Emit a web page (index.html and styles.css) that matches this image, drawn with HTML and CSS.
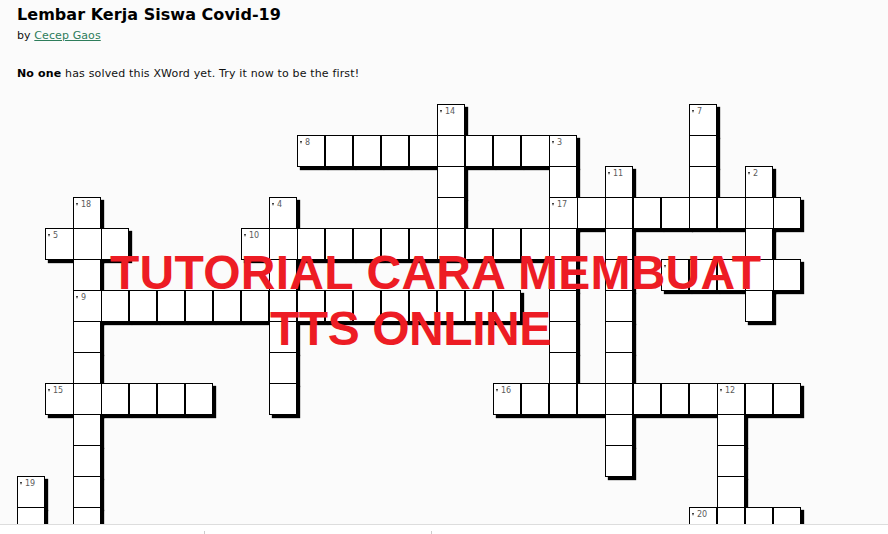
FILE: index.html
```html
<!DOCTYPE html>
<html lang="id">
<head>
<meta charset="utf-8">
<title>Lembar Kerja Siswa Covid-19</title>
<link rel="stylesheet" href="styles.css">
</head>
<body>
<main class="page">
  <h1 class="title">Lembar Kerja Siswa Covid-19</h1>
  <p class="byline">by <a href="#">Cecep Gaos</a></p>
  <p class="status"><strong>No one</strong> has solved this XWord yet. Try it now to be the first!</p>
  <div class="board">
    <div class="row">
      <div class="cell c15"><span class="num">14</span></div>
      <div class="cell c24"><span class="num">7</span></div>
    </div>
    <div class="row">
      <div class="cell c10"><span class="num">8</span></div>
      <div class="cell c11"></div><div class="cell c12"></div><div class="cell c13"></div><div class="cell j c14"></div><div class="cell c15"></div><div class="cell c16"></div><div class="cell c17"></div><div class="cell j c18"></div>
      <div class="cell c19"><span class="num">3</span></div>
      <div class="cell c24"></div>
    </div>
    <div class="row">
      <div class="cell c15"></div>
      <div class="cell c19"></div>
      <div class="cell c21"><span class="num">11</span></div>
      <div class="cell c24"></div>
      <div class="cell c26"><span class="num">2</span></div>
    </div>
    <div class="row">
      <div class="cell c2"><span class="num">18</span></div>
      <div class="cell c9"><span class="num">4</span></div>
      <div class="cell c15"></div>
      <div class="cell j c19"><span class="num">17</span></div>
      <div class="cell j c20"></div><div class="cell c21"></div><div class="cell c22"></div><div class="cell j c23"></div><div class="cell c24"></div><div class="cell j c25"></div><div class="cell j c26"></div><div class="cell c27"></div>
    </div>
    <div class="row">
      <div class="cell j c1"><span class="num">5</span></div>
      <div class="cell j c2"></div><div class="cell c3"></div>
      <div class="cell j c8"><span class="num">10</span></div>
      <div class="cell j c9"></div><div class="cell c10"></div><div class="cell c11"></div><div class="cell c12"></div><div class="cell c13"></div><div class="cell j c14"></div><div class="cell c15"></div><div class="cell c16"></div><div class="cell c17"></div><div class="cell j c18"></div><div class="cell c19"></div>
      <div class="cell c21"></div>
      <div class="cell c26"></div>
    </div>
    <div class="row">
      <div class="cell c2"></div>
      <div class="cell c9"></div>
      <div class="cell c19"></div>
      <div class="cell c21"></div>
      <div class="cell c23 marked"></div>
      <div class="cell c24"></div><div class="cell j c25"></div><div class="cell j c26"></div><div class="cell c27"></div>
    </div>
    <div class="row">
      <div class="cell j c2"><span class="num">9</span></div>
      <div class="cell c3"></div><div class="cell c4"></div><div class="cell c5"></div><div class="cell c6"></div><div class="cell c7"></div><div class="cell c8"></div><div class="cell c9"></div><div class="cell c10"></div><div class="cell c11"></div><div class="cell c12"></div><div class="cell c13"></div><div class="cell c14"></div><div class="cell c15"></div><div class="cell c16"></div><div class="cell c17"></div>
      <div class="cell c19"></div>
      <div class="cell c21"></div>
      <div class="cell c26"></div>
    </div>
    <div class="row">
      <div class="cell c2"></div>
      <div class="cell c9"></div>
      <div class="cell c19"></div>
      <div class="cell c21"></div>
    </div>
    <div class="row">
      <div class="cell c2"></div>
      <div class="cell c9"></div>
      <div class="cell c19"></div>
      <div class="cell c21"></div>
    </div>
    <div class="row">
      <div class="cell j c1"><span class="num">15</span></div>
      <div class="cell j c2"></div><div class="cell c3"></div><div class="cell c4"></div><div class="cell c5"></div><div class="cell c6"></div>
      <div class="cell c9"></div>
      <div class="cell c17"><span class="num">16</span></div>
      <div class="cell c18"></div><div class="cell c19"></div><div class="cell j c20"></div><div class="cell c21"></div><div class="cell c22"></div><div class="cell c23"></div><div class="cell j c24"></div>
      <div class="cell c25"><span class="num">12</span></div>
      <div class="cell c26"></div><div class="cell c27"></div>
    </div>
    <div class="row">
      <div class="cell c2"></div>
      <div class="cell c21"></div>
      <div class="cell c25"></div>
    </div>
    <div class="row">
      <div class="cell c2"></div>
      <div class="cell c21"></div>
      <div class="cell c25"></div>
    </div>
    <div class="row">
      <div class="cell c0"><span class="num">19</span></div>
      <div class="cell c2"></div>
      <div class="cell c25"></div>
    </div>
    <div class="row">
      <div class="cell c0"></div>
      <div class="cell c2"></div>
      <div class="cell c24"><span class="num">20</span></div>
      <div class="cell c25"></div><div class="cell c26"></div><div class="cell c27"></div>
    </div>
  </div>
  <div class="banner">
    <div class="line-one">TUTORIAL CARA MEMBUAT</div>
    <div class="line-two">TTS ONLINE</div>
  </div>
</main>
<footer class="bar">
  <span class="tick"></span>
  <span class="tick"></span>
</footer>
</body>
</html>
```
FILE: styles.css
```css
html, body {
  margin: 0;
  height: 100%;
}
body {
  display: flex;
  flex-direction: column;
  height: 534px;
  overflow: hidden;
  background: #fff;
  font-family: "DejaVu Sans", Verdana, sans-serif;
  color: #111;
}
.page {
  position: relative;
  flex: 1;
  min-height: 0;
  overflow: hidden;
  background: #fbfbfb;
  padding: 5px 0 0 17px;
}
.title {
  margin: 0;
  font-size: 16px;
  line-height: 20px;
  letter-spacing: 0.04px;
  font-weight: 700;
  color: #000;
}
.byline {
  margin: 3px 0 0;
  font-size: 11px;
  line-height: 16px;
  letter-spacing: 0.1px;
}
.byline a {
  color: #2e7d5b;
  text-decoration: underline;
}
.status {
  margin: 22px 0 0;
  font-size: 11px;
  line-height: 16px;
  letter-spacing: 0.16px;
}
.status strong {
  color: #000;
}
.board {
  margin-top: 22px;
}
.row {
  display: grid;
  grid-template-columns: repeat(28, 28px);
  height: 31px;
}
.cell {
  grid-row: 1;
  box-sizing: border-box;
  width: 28px;
  height: 32px;
  border: 1px solid #000;
  background: #fff;
  box-shadow: 3px 3px 1px #000;
  padding: 1px 0 0 2px;
  overflow: hidden;
}
.j {
  width: 29px;
}
.num {
  display: flex;
  align-items: center;
  gap: 3px;
  font-size: 8px;
  line-height: 11px;
  color: #5a5a5a;
}
.num::before,
.marked::before {
  content: "";
  display: block;
  width: 0;
  height: 0;
  border-left: 1.5px solid transparent;
  border-right: 1.5px solid transparent;
  border-top: 3px solid #222;
}
.marked::before {
  margin-top: 4px;
}
.c0 { grid-column-start: 1; }
.c1 { grid-column-start: 2; }
.c2 { grid-column-start: 3; }
.c3 { grid-column-start: 4; }
.c4 { grid-column-start: 5; }
.c5 { grid-column-start: 6; }
.c6 { grid-column-start: 7; }
.c7 { grid-column-start: 8; }
.c8 { grid-column-start: 9; }
.c9 { grid-column-start: 10; }
.c10 { grid-column-start: 11; }
.c11 { grid-column-start: 12; }
.c12 { grid-column-start: 13; }
.c13 { grid-column-start: 14; }
.c14 { grid-column-start: 15; }
.c15 { grid-column-start: 16; }
.c16 { grid-column-start: 17; }
.c17 { grid-column-start: 18; }
.c18 { grid-column-start: 19; }
.c19 { grid-column-start: 20; }
.c20 { grid-column-start: 21; }
.c21 { grid-column-start: 22; }
.c22 { grid-column-start: 23; }
.c23 { grid-column-start: 24; }
.c24 { grid-column-start: 25; }
.c25 { grid-column-start: 26; }
.c26 { grid-column-start: 27; }
.c27 { grid-column-start: 28; }
.banner {
  position: absolute;
  left: 0;
  top: 245px;
  font-family: "Liberation Sans", Arial, sans-serif;
  font-weight: 700;
  font-size: 48px;
  line-height: 56px;
  white-space: nowrap;
  color: #ed1c24;
}
.line-one {
  margin-left: 110px;
  letter-spacing: 0.25px;
}
.line-two {
  margin-left: 270px;
  letter-spacing: -0.45px;
}
.bar {
  flex: 0 0 10px;
  box-sizing: border-box;
  height: 10px;
  border-top: 1px solid #ddd;
  background: #fff;
  display: flex;
  align-items: flex-end;
  padding-left: 204px;
  gap: 226px;
}
.tick {
  width: 1px;
  height: 3px;
  background: #ccc;
}
```
